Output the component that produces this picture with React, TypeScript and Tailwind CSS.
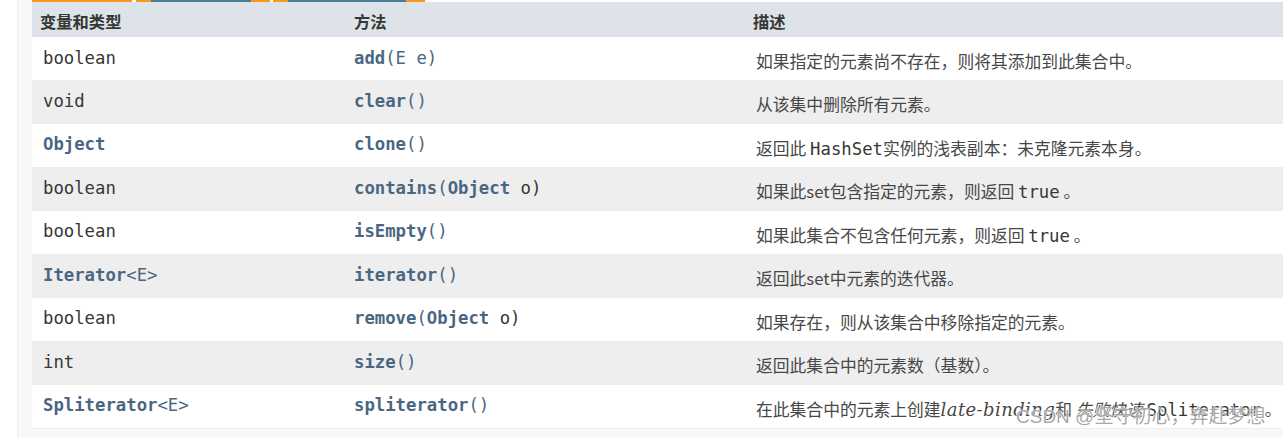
import React from 'react';

const mono = "font-['DejaVu_Sans_Mono',monospace]";
const link = 'font-bold text-[#4a6782]';

type Row = {
  type: React.ReactNode;
  method: React.ReactNode;
  desc: React.ReactNode;
};

const Code = ({ children }: { children: React.ReactNode }) => (
  <code className={`${mono} text-[17.3px] text-[#353833]`}>{children}</code>
);

const rows: Row[] = [
  {
    type: 'boolean',
    method: (
      <>
        <span className={link}>add</span>
        <span className="text-[#4a6782]">(E e)</span>
      </>
    ),
    desc: '如果指定的元素尚不存在，则将其添加到此集合中。',
  },
  {
    type: 'void',
    method: (
      <>
        <span className={link}>clear</span>
        <span className="text-[#4a6782]">()</span>
      </>
    ),
    desc: '从该集中删除所有元素。',
  },
  {
    type: <span className={link}>Object</span>,
    method: (
      <>
        <span className={link}>clone</span>
        <span className="text-[#4a6782]">()</span>
      </>
    ),
    desc: (
      <>
        返回此 <Code>HashSet</Code>实例的浅表副本：未克隆元素本身。
      </>
    ),
  },
  {
    type: 'boolean',
    method: (
      <>
        <span className={link}>contains</span>
        <span className="text-[#4a6782]">(</span>
        <span className={link}>Object</span> o)
      </>
    ),
    desc: (
      <>
        如果此set包含指定的元素，则返回 <Code>true</Code> 。
      </>
    ),
  },
  {
    type: 'boolean',
    method: (
      <>
        <span className={link}>isEmpty</span>
        <span className="text-[#4a6782]">()</span>
      </>
    ),
    desc: (
      <>
        如果此集合不包含任何元素，则返回 <Code>true</Code> 。
      </>
    ),
  },
  {
    type: (
      <>
        <span className={link}>Iterator</span>
        <span className="text-[#4a6782]">&lt;E&gt;</span>
      </>
    ),
    method: (
      <>
        <span className={link}>iterator</span>
        <span className="text-[#4a6782]">()</span>
      </>
    ),
    desc: '返回此set中元素的迭代器。',
  },
  {
    type: 'boolean',
    method: (
      <>
        <span className={link}>remove</span>
        <span className="text-[#4a6782]">(</span>
        <span className={link}>Object</span> o)
      </>
    ),
    desc: '如果存在，则从该集合中移除指定的元素。',
  },
  {
    type: 'int',
    method: (
      <>
        <span className={link}>size</span>
        <span className="text-[#4a6782]">()</span>
      </>
    ),
    desc: '返回此集合中的元素数（基数）。',
  },
  {
    type: (
      <>
        <span className={link}>Spliterator</span>
        <span className="text-[#4a6782]">&lt;E&gt;</span>
      </>
    ),
    method: (
      <>
        <span className={link}>spliterator</span>
        <span className="text-[#4a6782]">()</span>
      </>
    ),
    desc: (
      <>
        在此集合中的元素上创建
        <i className="font-['DejaVu_Serif',serif] text-[18px] tracking-[0.4px]">late-binding</i>和 <i>失败快速</i>{' '}
        <Code>Spliterator</Code> 。
      </>
    ),
  },
];

export default function App() {
  return (
    <div className="relative h-[438px] w-[1283px] overflow-hidden bg-white">
      <div className="ml-[17px] h-full border-l border-[#eeeeee] bg-[#f8f8f8] pl-[14px]">
        {/* tab strip (cut off at the top) */}
        <div className="flex h-[2px] bg-white">
          <span className="w-[100px] bg-[#f8981d]" />
          <span className="w-[4px]" />
          <span className="w-[15px] bg-[#f8981d]" />
          <span className="w-[100px] bg-[#4d7a97]" />
          <span className="w-[19px] bg-[#f8981d]" />
          <span className="w-[3px]" />
          <span className="w-[15px] bg-[#f8981d]" />
          <span className="w-[118px] bg-[#4d7a97]" />
          <span className="w-[19px] bg-[#f8981d]" />
        </div>

        <div className="w-[1300px] border-b border-[#eeeeee] bg-white">
          {/* header */}
          <div className="grid h-[35px] grid-cols-[312px_400px_1fr] bg-[#dee3e9] font-['Noto_Sans_CJK_SC',sans-serif] text-[16.3px] leading-[24px] font-bold text-[#353833]">
            <div className="pl-[8px] pt-[7px]">变量和类型</div>
            <div className="pl-[10px] pt-[7px]">方法</div>
            <div className="pl-[9px] pt-[7px]">描述</div>
          </div>

          {rows.map((r, i) => (
            <div
              key={i}
              className={`grid h-[43.44px] grid-cols-[312px_400px_1fr] ${i % 2 === 1 ? 'bg-[#eeeeef]' : 'bg-white'}`}
            >
              <div className={`${mono} pl-[11px] pt-[10.5px] text-[17.3px] leading-[21px] text-[#353833]`}>{r.type}</div>
              <div className={`${mono} pl-[10px] pt-[10.5px] text-[17.3px] leading-[21px] text-[#353833]`}>{r.method}</div>
              <div className="whitespace-nowrap pl-[12px] pt-[12px] font-['Liberation_Serif','Noto_Sans_CJK_SC',serif] text-[16.8px] leading-[24px] text-[#474747]">
                <span className="font-['Noto_Sans_CJK_SC',sans-serif]">{r.desc}</span>
              </div>
            </div>
          ))}
        </div>
      </div>

      {/* CSDN watermark */}
      <div className="pointer-events-none absolute left-[1016px] top-[405px] whitespace-nowrap font-['Liberation_Sans','Noto_Sans_CJK_SC',sans-serif] text-[19px] leading-[24px] text-[#8a8a8a]/75 [text-shadow:0_0_2px_#fff,0_0_1px_#fff]">
        CSDN @坚守初心，奔赴梦想
      </div>
    </div>
  );
}
